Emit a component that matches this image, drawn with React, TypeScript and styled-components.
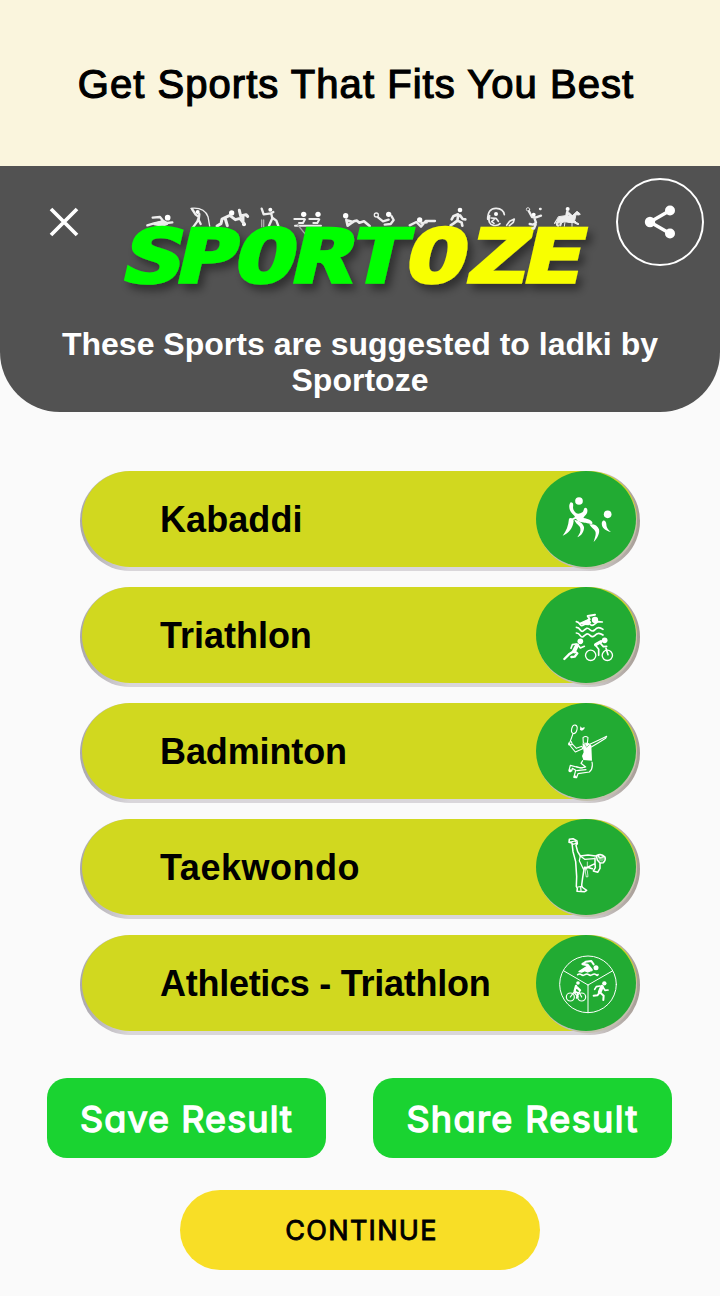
import React from "react";
import styled, { createGlobalStyle } from "styled-components";

const GlobalStyle = createGlobalStyle`
  * { box-sizing: border-box; }
  body { margin: 0; background: #fafafa; font-family: "Liberation Sans", Arial, sans-serif; }
  button { border: 0; padding: 0; background: none; font: inherit; color: inherit; }
`;

const Screen = styled.main`
  width: 720px;
  height: 1296px;
  display: flex;
  flex-direction: column;
  background: #fafafa;
  overflow: hidden;
`;

const Banner = styled.h1`
  margin: 0;
  height: 166px;
  padding: 2px 8px 0 0;
  display: flex;
  align-items: center;
  justify-content: center;
  background: #faf5dd;
  color: #000;
  font-size: 40px;
  font-weight: 400;
  letter-spacing: 1.04px;
  white-space: nowrap;
  -webkit-text-stroke: 1.2px #000;
`;

const Header = styled.header`
  height: 246px;
  background: #525252;
  border-radius: 0 0 60px 60px;
  color: #fff;
`;

const TopBar = styled.div`
  display: flex;
  height: 160px;
  padding: 12px 16px 0 48px;
`;

const CloseButton = styled.button`
  width: 32px;
  height: 32px;
  margin-top: 28px;
  svg { display: block; }
`;

const Logo = styled.svg`
  width: 490px;
  height: 115px;
  margin: 12px 16px 0 30px;
  flex: none;
`;

const ShareButton = styled.button`
  width: 88px;
  height: 88px;
  flex: none;
  display: flex;
  align-items: center;
  justify-content: center;
  border: 2px solid #fff;
  border-radius: 50%;
`;

const Subtitle = styled.p`
  margin: 0;
  text-align: center;
  font-size: 32px;
  line-height: 36px;
  font-weight: 700;
  letter-spacing: 0.01px;
  white-space: nowrap;
`;

const SportList = styled.ul`
  list-style: none;
  margin: 59px 80px 0;
  padding: 0;
  display: flex;
  flex-direction: column;
  gap: 16px;
`;

const SportRow = styled.li`
  height: 100px;
  padding: 0 3px 4px 2px;
  border-radius: 50px;
  background: linear-gradient(90deg, #a9a6ac 0, #d9d6da 50px, #d9d6da 500px, #a69c94 100%);
`;

const SportPill = styled.div`
  height: 96px;
  display: flex;
  align-items: center;
  justify-content: space-between;
  padding: 0 0 0 78px;
  border-radius: 48px;
  background: #d1d81f;
`;

const SportName = styled.span<{ $spacing: number }>`
  padding-top: 2px;
  font-size: 36px;
  font-weight: 700;
  color: #000;
  white-space: nowrap;
  letter-spacing: ${(p) => p.$spacing}px;
`;

const SportBadge = styled.div`
  width: 100px;
  height: 96px;
  margin-right: 1px;
  flex: none;
  border-radius: 50%;
  background: #22ab33;
  box-shadow: 1px 2px 0 #c3bfae;
  svg { display: block; }
`;

const Actions = styled.div`
  display: flex;
  justify-content: space-between;
  margin: 43px 48px 0 47px;
`;

const ActionButton = styled.button<{ $width: number; $spacing: number }>`
  width: ${(p) => p.$width}px;
  height: 80px;
  padding-top: 2px;
  border-radius: 20px;
  background: #1ad331;
  color: #fff;
  font-family: Inter, sans-serif;
  font-size: 36px;
  font-weight: 400;
  font-feature-settings: "cv11" 1;
  letter-spacing: ${(p) => p.$spacing}px;
  -webkit-text-stroke: 1.5px #fff;
  white-space: nowrap;
`;

const ContinueButton = styled.button`
  align-self: center;
  width: 360px;
  height: 80px;
  padding-left: 3px;
  margin-top: 32px;
  border-radius: 40px;
  background: #f8de26;
  color: #000;
  font-family: Inter, sans-serif;
  font-size: 27px;
  font-weight: 400;
  letter-spacing: 1.3px;
  -webkit-text-stroke: 0.9px #000;
`;

const Glyph = ({ children }: { children: React.ReactNode }) => (
  <svg width="100" height="96" viewBox="48 33 300 288" fill="none" stroke="#fff" strokeWidth="6" strokeLinecap="round" strokeLinejoin="round" aria-hidden="true">
    {children}
  </svg>
);

const KabaddiIcon = () => (
  <Glyph>
    <g fill="#fff" stroke="none">
      <circle cx="177" cy="123" r="11.5" />
      <circle cx="263" cy="163" r="11.5" />
      <path d="M152 127c-6 7-5 18-1 26 4 7 8 11 12 14l2 4c-9 5-16 9-15 12 3 3 12-6 18-7 6 11 22 11 29 12 9 2 14 5 20 3 3-9-12-14-27-17l4-6c7-6 9-12 8-19-1-6-6-8-9-4-2 4-2 9-6 12-6 4-14 6-19 2-6-5-9-11-9-17 1-8 2-15-7-15z" />
      <path d="M147 176c-2 21-8 37-19 51 17-6 31-23 33-44-1-8-9-12-14-7z" />
      <path d="M163 179c4 14 17 16 18 26 2 9-2 17-9 27 13-5 21-19 20-31-4-13-15-19-29-22z" />
      <path d="M208 193c6 12 18 15 19 25 1 9-4 18-6 28 10-9 19-25 16-38-4-12-15-17-29-15z" />
      <path d="M249 182c-5 3-5 14 1 22 6 7 14 10 23 12-11-9-14-15-14-24-1-8-5-12-10-10z" />
    </g>
  </Glyph>
);

const TriathlonIcon = () => (
  <Glyph>
    <g fill="#fff" stroke="none">
      <circle cx="225" cy="132" r="9.5" />
      <circle cx="181" cy="196" r="8.5" />
      <circle cx="254" cy="193" r="8.5" />
      <path d="M180 143l29-13-6-10 22-4" stroke="#fff" strokeWidth="6" fill="none" />
      <path d="M178 143l28-14 8 10-8 9-13-1z" />
    </g>
    <g strokeWidth="5">
      <path d="M169 137q7 1 11 8t13 1l7-5q5-2 10 4t13 0l11-8 13 1" />
      <path d="M169 154q7 0 12 8t12 0l7-5q5-1 11 5t13 0q6-7 12-7t13 5" />
      <path d="M169 171q7 0 12 8t12 0l7-5q5-1 11 5t13 0q6-7 12-7t13 5" />
      <path d="M168 204l-11 2-4 11M174 207l7 9 12-5" />
      <path d="M171 208l-9 18" strokeWidth="12" />
      <path d="M159 227l-12 8-14 14M164 226l8 6-8 10-10 1" strokeWidth="7" />
      <circle cx="212" cy="238" r="15.5" strokeWidth="4" />
      <circle cx="262" cy="238" r="15.5" strokeWidth="4" />
      <path d="M226 207l10 13 0 18M242 203l8 9 10-1M258 217l6 19" />
      <path d="M243 197l-16 9" strokeWidth="10" />
    </g>
  </Glyph>
);

const BadmintonIcon = () => (
  <Glyph>
    <g strokeWidth="3.3">
      <ellipse cx="163" cy="112" rx="8" ry="13" transform="rotate(13 163 112)" />
      <path d="M159 125l-9 25-3 9 10-1-3-9M149 159l17 21 22-10-2-7-17 6-12-13" />
      <path d="M190 153l-1-16q8-7 15 0l-2 17zM206 158l31-14 23-11-3 6-23 14-20 12" />
      <path d="M188 206l-5 8 14 11-16 3-30-8-4 15 8 2 2-8 10 6-5 20 8 2 4-12 34-5q12-10 8-30" strokeWidth="3.6" />
      <path d="M169 224l17 4 8-3M170 236l28-3" />
    </g>
    <g fill="#fff" stroke="none">
      <path d="M187 154l6 2 13-3 8 7 2 46-26-2-4-12 5-11z" />
      <path d="M181 103l5 5 8-3-1 6-7 5-6-2zM145 151l10 8-11-1zM147 231l9 2-3 8-7-1zM162 250l8 1-1 8-9-1z" />
    </g>
    <path d="M195 157l5 9 7-7" stroke="#22ab33" strokeWidth="1.5" />
  </Glyph>
);

const TaekwondoIcon = () => (
  <Glyph>
    <g strokeWidth="4.6">
      <path d="M148 94l11-2 12 7 1 8-4 5 5 19 8 13 23-3 23 3M148 94l-1 9 9 2 3 26 8 30 3 45-1 29 3 6-1 9 23 1 6-4-14-10-1-6 3-22 5-31 14 1 10 3" />
      <path d="M150 102l16-3 4 7-13 3M181 144l-3 14 12 25M181 144l13 10 29-2M174 237l12-2M182 238l1 10" strokeWidth="3.6" />
      <path d="M229 143q15-8 26 4 3 10-5 17l-10 1-8-9zM235 145l5 5 11-4M225 150v17l-27 13M240 164v17l-7 12-13-4 6-10-1-12" />
      <path d="M197 178l-1 14 3 15 5-1-2-17-5-11M202 162v18M190 183l8-1" strokeWidth="3" opacity="0.75" />
    </g>
    <path d="M234 150l14-4 5 6-6 9-9-2z" fill="#b7e4bb" stroke="none" opacity="0.55" />
  </Glyph>
);

const AthleticsIcon = () => (
  <Glyph>
    <circle cx="204" cy="181" r="85" strokeWidth="3" />
    <path d="M204 183v83M204 183l-72-42M204 183l73-42" strokeWidth="3" />
    <circle cx="228" cy="131" r="7.5" fill="#fff" stroke="none" />
    <circle cx="174" cy="177" r="5.5" fill="#fff" stroke="none" />
    <circle cx="253" cy="178" r="6.5" fill="#fff" stroke="none" />
    <path d="M177 143l26-17 10 14-10 4-9-4-8 4z" fill="#fff" stroke="#fff" strokeWidth="4" />
    <path d="M188 120l9-7 17-2 7 10" />
    <path d="M188 120l15 3 12 15" strokeWidth="7" />
    <path d="M173 152q6-4 11 0t11 0 11 0 11 0 11 0 6 0" strokeWidth="5" />
    <path d="M240 186l-11 2-5 8M249 190l6 9 9-1" strokeWidth="5" />
    <path d="M246 188l-7 16" strokeWidth="11" />
    <path d="M239 206l-7 8-11 1M241 206l10 9-1 13" strokeWidth="6" />
    <g strokeWidth="3.5">
      <circle cx="151" cy="219" r="12" />
      <circle cx="185" cy="219" r="12" />
      <path d="M151 219l10-14 14 14M164 206h14l7 13M177 207l2-7" />
      <path d="M168 186l-4 15M171 190l9 9" strokeWidth="7" />
      <path d="M164 202l10 5-4 15" strokeWidth="5" />
    </g>
  </Glyph>
);

const SportozeLogo = () => (
  <Logo viewBox="0 0 1470 345" role="img" aria-label="Sportoze">
    <defs>
      <filter id="wordShadow" x="-10%" y="-20%" width="120%" height="160%">
        <feDropShadow dx="14" dy="18" stdDeviation="12" floodColor="#000" floodOpacity="0.42" />
      </filter>
    </defs>
    <g fill="none" stroke="#eee" strokeWidth="7" strokeLinecap="round" strokeLinejoin="round">
      {/* swimmer */}
      <circle cx="173" cy="83" r="8.5" fill="#fff" stroke="none" />
      <path d="M128 83l22-2 9 11 12 7 16-2M112 106l20-6 27-6" />
      <path d="M133 102l24-8 14 8-14 5z" fill="#eee" />
      {/* pole vaulter */}
      <circle cx="263" cy="66" r="6" fill="#fff" stroke="none" />
      <path d="M243 55q40-4 51 25l5 28" strokeWidth="4" />
      <path d="M246 57l11 17 10 7-5 13-13 18M268 72l-2 18 6 12" strokeWidth="7" />
      {/* judo */}
      <circle cx="365" cy="69" r="8" fill="#fff" stroke="none" />
      <circle cx="402" cy="103" r="6" fill="#fff" stroke="none" />
      <path d="M358 77l-22 10-3 14-12 7M346 87l6 20M363 79l13 10 14-4 11 14M388 61l4 17 16-4 5 5M399 78v17" strokeWidth="9" />
      {/* cricket */}
      <circle cx="481" cy="59" r="6" fill="#fff" stroke="none" />
      <path d="M455 56l6 17 22-3 7-4M484 72l3 13-10 22M488 84l11 8 6 16" strokeWidth="7" />
      <path d="M455 90v20M461 90v20" strokeWidth="4" stroke="#aaa" />
      {/* rowing */}
      <circle cx="581" cy="73" r="8" fill="#fff" stroke="none" />
      <circle cx="624" cy="73" r="8" fill="#fff" stroke="none" />
      <path d="M553 87h30M598 87h28M567 99h12l6-11M610 99h12l6-11M555 107h78" strokeWidth="6" />
      <path d="M562 103l26 32" strokeWidth="4" stroke="#aaa" />
      {/* sit-ups */}
      <circle cx="707" cy="77" r="8" fill="#fff" stroke="none" />
      <path d="M709 89l4 18 20-14 8-1 7 6 14-4 17 14M713 92l17 4" strokeWidth="8" />
      {/* table tennis */}
      <circle cx="836" cy="73" r="8" fill="#fff" stroke="none" />
      <circle cx="799" cy="75" r="6" strokeWidth="4" />
      <path d="M804 82l15 12 17-5M845 79l6 11-9 12-18 2" />
      {/* shooting */}
      <circle cx="929" cy="90" r="8" fill="#fff" stroke="none" />
      <path d="M899 106l20-10 14 14 14-17h28M934 99l16-2" />
      {/* walking */}
      <circle cx="1050" cy="60" r="7" fill="#fff" stroke="none" />
      <path d="M1044 73l-14 6-5 9M1045 75l-3 17-12 9-8 5M1043 92l12 6 2 9M1050 76l8 11 8 1" strokeWidth="8" />
      {/* wheel gymnast */}
      <path d="M1133 88q0-34 26-33 21 1 24 19M1139 77q-8 25 12 29 13 2 19-5" strokeWidth="5" />
      <circle cx="1158" cy="72" r="6" fill="#fff" stroke="none" />
      <path d="M1143 84l15 1 7 9M1154 87l-9 8 7 5M1190 106l9-12 14-7-3 10-12 10" strokeWidth="5" />
      {/* horse rider */}
      <circle cx="1373" cy="57" r="6" fill="#fff" stroke="none" />
      <path d="M1372 65l-3 15 8 14M1375 70l9 8" strokeWidth="8" />
      <path d="M1346 80l20-3 20 1 15-14 10 8-3 3-10-1-4 18 5 5 8 5-3 2-12-6-16-1-12-2-9 3-3 10-3-1 2-12-8 6 3 8-5-1-3-9 6-9-7 3-3 7z" fill="#eee" strokeWidth="3" />
      <path d="M1386 96v13M1365 96l-2 13" strokeWidth="3" />
    </g>
    <g filter="url(#wordShadow)">
      <g transform="translate(0 276) skewX(-13) scale(1.35 1)" fontFamily="DejaVu Sans Mono" fontWeight="700" fontSize="220" strokeWidth="11" strokeLinejoin="miter" strokeMiterlimit="3">
        <text fill="#00ff00" stroke="#00ff00" x="21 140 270 399 523" y="0">SPORT</text>
        <text fill="#f8ff00" stroke="#f8ff00" x="650 786 911" y="0">OZE</text>
      </g>
    </g>
    {/* badminton player in front of the letters */}
    <g fill="none" stroke="#eee" strokeWidth="7" strokeLinecap="round" strokeLinejoin="round">
      <circle cx="1254" cy="58" r="5" strokeWidth="2.5" />
      <circle cx="1271" cy="74" r="6" fill="#fff" stroke="none" />
      <path d="M1257 64l9 17 12 1 15-5M1273 84l5 14-9 6-10-2M1277 104l-5 12-5-1M1290 57h2" />
    </g>
  </Logo>
);

const sports = [
  { name: "Kabaddi", spacing: 0.08, Icon: KabaddiIcon },
  { name: "Triathlon", spacing: -0.02, Icon: TriathlonIcon },
  { name: "Badminton", spacing: -0.12, Icon: BadmintonIcon },
  { name: "Taekwondo", spacing: 0.53, Icon: TaekwondoIcon },
  { name: "Athletics - Triathlon", spacing: -0.27, Icon: AthleticsIcon },
];

export default function App() {
  return (
    <Screen>
      <GlobalStyle />
      <Banner>Get Sports That Fits You Best</Banner>
      <Header>
        <TopBar>
          <CloseButton aria-label="Close">
            <svg width="32" height="32" viewBox="0 0 32 32" stroke="#fff" strokeWidth="3.7">
              <path d="M3 3l26 26M29 3L3 29" />
            </svg>
          </CloseButton>
          <SportozeLogo />
          <ShareButton aria-label="Share">
            <svg width="36" height="36" viewBox="0 0 36 36" fill="#fff">
              <path d="M28 6.5L8 18l20 11.5" fill="none" stroke="#fff" strokeWidth="3.4" />
              <circle cx="28" cy="6.5" r="5" />
              <circle cx="8" cy="18" r="5.2" />
              <circle cx="28" cy="29.5" r="5" />
            </svg>
          </ShareButton>
        </TopBar>
        <Subtitle>
          These Sports are suggested to ladki by
          <br />
          Sportoze
        </Subtitle>
      </Header>
      <SportList>
        {sports.map(({ name, spacing, Icon }) => (
          <SportRow key={name}>
            <SportPill>
              <SportName $spacing={spacing}>{name}</SportName>
              <SportBadge>
                <Icon />
              </SportBadge>
            </SportPill>
          </SportRow>
        ))}
      </SportList>
      <Actions>
        <ActionButton $width={279} $spacing={1.1}>Save Result</ActionButton>
        <ActionButton $width={299} $spacing={1.4}>Share Result</ActionButton>
      </Actions>
      <ContinueButton>CONTINUE</ContinueButton>
    </Screen>
  );
}
